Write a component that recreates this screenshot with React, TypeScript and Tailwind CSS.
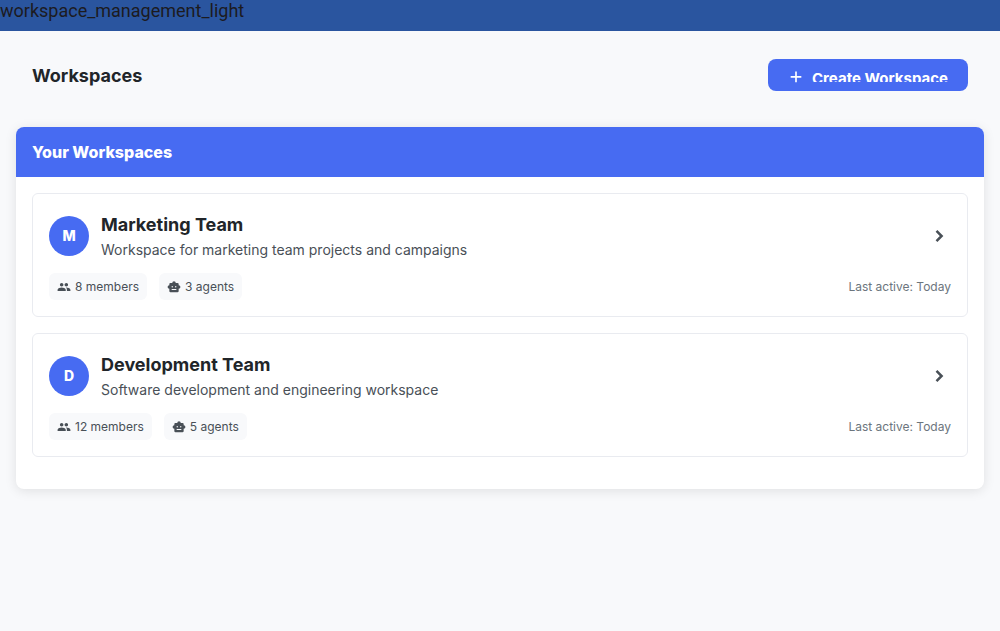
import React from "react";

type Workspace = {
  initial: string;
  name: string;
  description: string;
  members: number;
  agents: number;
  lastActive: string;
};

const workspaces: Workspace[] = [
  {
    initial: "M",
    name: "Marketing Team",
    description: "Workspace for marketing team projects and campaigns",
    members: 8,
    agents: 3,
    lastActive: "Today",
  },
  {
    initial: "D",
    name: "Development Team",
    description: "Software development and engineering workspace",
    members: 12,
    agents: 5,
    lastActive: "Today",
  },
];

function Icon({ path, className }: { path: string; className: string }) {
  return (
    <svg viewBox="0 0 24 24" fill="currentColor" aria-hidden="true" className={className}>
      <path d={path} />
    </svg>
  );
}

const plusPath = "M20 16h-6.75v6.75h-2.5V16H4v-2.5h6.75V6.75h2.5v6.75H20z";
const peoplePath =
  "M16 11c1.66 0 2.99-1.34 2.99-3S17.66 5 16 5s-3 1.34-3 3 1.34 3 3 3zm-8 0c1.66 0 2.99-1.34 2.99-3S9.66 5 8 5 5 6.34 5 8s1.34 3 3 3zm0 2c-2.33 0-7 1.17-7 3.5V19h14v-2.5c0-2.33-4.67-3.5-7-3.5zm8 0c-.29 0-.62.02-.97.05 1.16.84 1.97 1.97 1.97 3.45V19h6v-2.5c0-2.33-4.67-3.5-7-3.5z";
const robotPath =
  "M20 9V7a2 2 0 0 0-2-2h-3a3 3 0 0 0-6 0H6a2 2 0 0 0-2 2v2a3 3 0 0 0 0 6v4a2 2 0 0 0 2 2h12a2 2 0 0 0 2-2v-4a3 3 0 0 0 0-6M7.8 11.5a1.2 1.2 0 1 1 2.4 0 1.2 1.2 0 0 1-2.4 0M16 17H8v-1.600h8v1.600m-1-4.300a1.200 1.200 0 1 1 0-2.400 1.200 1.200 0 0 1 0 2.400z";

function Chip({ path, label }: { path: string; label: string }) {
  return (
    <li className="flex h-[27px] items-center gap-1 rounded-md bg-[#f8f9fb] px-2">
      <Icon path={path} className="size-[14px]" />
      <span>{label}</span>
    </li>
  );
}

function WorkspaceCard({ workspace }: { workspace: Workspace }) {
  return (
    <li className="rounded-md border border-[#e9ebf0] bg-white p-4">
      <div className="flex items-center gap-3">
        <div className="flex size-10 shrink-0 items-center justify-center rounded-full bg-[#476bf2] text-sm font-extrabold text-white">
          {workspace.initial}
        </div>
        <div className="min-w-0 flex-1 pb-[2px]">
          <h3 className="text-lg leading-[30px] font-bold text-[#212529]">{workspace.name}</h3>
          <p className="text-sm leading-5 text-[#495057]">{workspace.description}</p>
        </div>
        <button
          type="button"
          aria-label={`Open ${workspace.name}`}
          className="flex w-6 justify-center text-[#495057]"
        >
          <svg
            viewBox="0 0 24 24"
            fill="none"
            stroke="currentColor"
            strokeWidth="2.5"
            aria-hidden="true"
            className="size-6"
          >
            <path d="M9.5 6.9 14.6 12l-5.1 5.1" />
          </svg>
        </button>
      </div>
      <div className="mt-[11px] flex items-center justify-between text-xs">
        <ul className="flex gap-3 text-[#495057]">
          <Chip path={peoplePath} label={`${workspace.members} members`} />
          <Chip path={robotPath} label={`${workspace.agents} agents`} />
        </ul>
        <p className="text-[#6c757d]">Last active: {workspace.lastActive}</p>
      </div>
    </li>
  );
}

export default function App() {
  return (
    <div className="min-h-screen bg-[#f8f9fb] font-['Inter',sans-serif]">
      <div className="h-[31px] bg-[#2a559f] font-['Roboto',sans-serif] text-lg leading-[22px] text-[#1c1b1f]">
        workspace_management_light
      </div>
      <header className="flex items-end justify-between px-8 pt-7 pb-9">
        <h1 className="text-lg leading-[30px] font-bold text-[#212529]">Workspaces</h1>
        <button
          type="button"
          className="flex h-8 items-center gap-2 rounded-lg bg-[#476bf2] px-5 text-[15px] font-bold text-white"
        >
          <Icon path={plusPath} className="size-4" />
          <span className="h-[14px] overflow-hidden leading-[21px]">Create Workspace</span>
        </button>
      </header>
      <main className="px-4">
        <section className="overflow-hidden rounded-lg bg-white shadow-[0_2px_12px_rgba(0,0,0,0.1)]">
          <h2 className="bg-[#476bf2] px-4 py-[13px] text-base leading-6 font-extrabold text-white">
            Your Workspaces
          </h2>
          <ul className="flex flex-col gap-4 px-4 pt-4 pb-8">
            {workspaces.map((workspace) => (
              <WorkspaceCard key={workspace.name} workspace={workspace} />
            ))}
          </ul>
        </section>
      </main>
    </div>
  );
}
